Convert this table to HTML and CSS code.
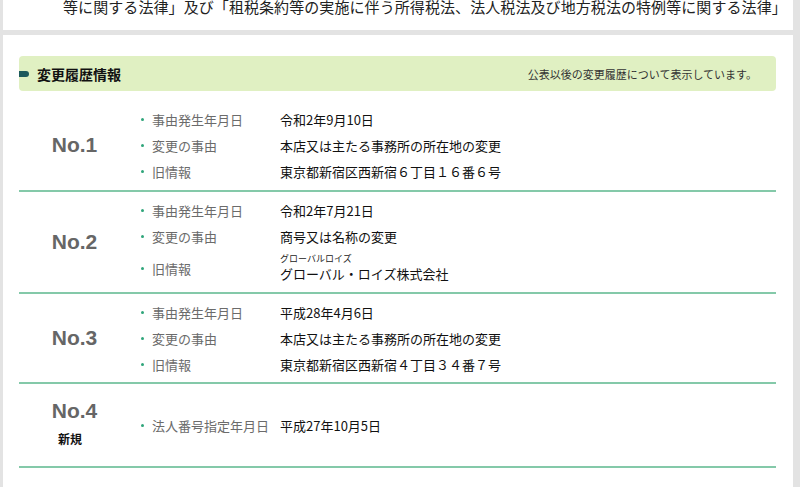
FILE: index.html
```html
<!DOCTYPE html>
<html lang="ja">
<head>
<meta charset="utf-8">
<link rel="stylesheet" href="styles.css">
</head>
<body>
<div class="page">
  <div class="card card-top">
    <p class="law">等に関する法律」及び「租税条約等の実施に伴う所得税法、法人税法及び地方税法の特例等に関する法律」</p>
  </div>
  <div class="card card-main">
    <div class="head">
      <h2 class="head-title"><span class="marker"></span>変更履歴情報</h2>
      <p class="head-note">公表以後の変更履歴について表示しています。</p>
    </div>
    <div class="history">
      <div class="entry entry-first">
        <div class="no"><span class="no-num">No.1</span></div>
        <ul class="items">
          <li class="item"><span class="label">事由発生年月日</span><span class="value">令和2年9月10日</span></li>
          <li class="item"><span class="label">変更の事由</span><span class="value">本店又は主たる事務所の所在地の変更</span></li>
          <li class="item"><span class="label">旧情報</span><span class="value">東京都新宿区西新宿６丁目１６番６号</span></li>
        </ul>
      </div>
      <div class="entry">
        <div class="no"><span class="no-num">No.2</span></div>
        <ul class="items">
          <li class="item"><span class="label">事由発生年月日</span><span class="value">令和2年7月21日</span></li>
          <li class="item"><span class="label">変更の事由</span><span class="value">商号又は名称の変更</span></li>
          <li class="item item-ruby"><span class="label">旧情報</span><span class="value"><span class="kana">グローバルロイズ</span><span class="name">グローバル・ロイズ株式会社</span></span></li>
        </ul>
      </div>
      <div class="entry">
        <div class="no"><span class="no-num">No.3</span></div>
        <ul class="items">
          <li class="item"><span class="label">事由発生年月日</span><span class="value">平成28年4月6日</span></li>
          <li class="item"><span class="label">変更の事由</span><span class="value">本店又は主たる事務所の所在地の変更</span></li>
          <li class="item"><span class="label">旧情報</span><span class="value">東京都新宿区西新宿４丁目３４番７号</span></li>
        </ul>
      </div>
      <div class="entry">
        <div class="no no-new"><span class="no-num">No.4</span><span class="new">新規</span></div>
        <ul class="items">
          <li class="item"><span class="label">法人番号指定年月日</span><span class="value">平成27年10月5日</span></li>
        </ul>
      </div>
    </div>
  </div>
</div>
</body>
</html>
```

FILE: styles.css
```css
* { box-sizing: border-box; }
html, body { margin: 0; padding: 0; }
body {
  background: #e3e3e3;
  font-family: "Noto Sans CJK JP", "Noto Sans", sans-serif;
  color: #111;
  overflow: hidden;
  height: 487px;
}
.page {
  display: flex;
  flex-direction: column;
  gap: 5px;
  padding: 0 7px 0 3px;
}
.card { background: #fff; }
.card-top {
  height: 30px;
  padding: 0 0 0 60px;
  overflow: hidden;
}
.law {
  margin: -4px 0 0;
  font-size: 15px;
  line-height: 22px;
  white-space: nowrap;
  letter-spacing: 0.08px;
  color: #222;
}
.card-main {
  padding: 21px 17px 30px 16px;
  min-height: 460px;
}
.head {
  display: flex;
  align-items: center;
  justify-content: space-between;
  height: 35px;
  background: #e0f0c2;
  border-radius: 4px;
  padding: 0 19px 0 0;
}
.head-title {
  margin: 0;
  display: flex;
  align-items: center;
  gap: 8px;
  font-size: 14px;
  font-weight: 700;
  color: #111;
}
.marker {
  display: block;
  width: 10px;
  height: 6px;
  background: #1d5a5c;
  border-radius: 0 3px 3px 0;
}
.head-note {
  margin: 0;
  font-size: 11px;
  color: #333;
}
.history { display: flex; flex-direction: column; }
.entry {
  display: flex;
  align-items: center;
  border-bottom: 2px solid #84c9a9;
  padding: 5px 0 5px;
}
.entry-first { margin-top: 10px; padding-bottom: 6px; }
.no {
  width: 111px;
  flex: none;
  display: flex;
  flex-direction: column;
  align-items: center;
}
.no-num {
  font-family: "Liberation Sans", "Noto Sans", sans-serif;
  font-weight: 700;
  font-size: 21px;
  color: #666;
  line-height: 28px;
}
.no-new { padding: 8px 0 8px; }
.new {
  font-size: 12px;
  font-weight: 700;
  color: #111;
  line-height: 28px;
  margin-right: 9px;
}
.items {
  list-style: none;
  margin: 0;
  padding: 0;
  display: flex;
  flex-direction: column;
}
.item {
  display: flex;
  align-items: center;
  min-height: 26px;
  font-size: 13px;
}
.item-ruby { min-height: 38px; }
.label {
  position: relative;
  flex: none;
  width: 150px;
  padding-left: 22px;
  color: #6b6b6b;
  white-space: nowrap;
}
.label::before {
  content: "";
  position: absolute;
  left: 11px;
  top: 50%;
  width: 3px;
  height: 3px;
  margin-top: -1px;
  border-radius: 50%;
  background: #2fa57a;
}
.value {
  color: #111;
  display: flex;
  flex-direction: column;
}
.kana {
  font-size: 9px;
  line-height: 11px;
  color: #222;
}
.name { line-height: 20px; }
```
